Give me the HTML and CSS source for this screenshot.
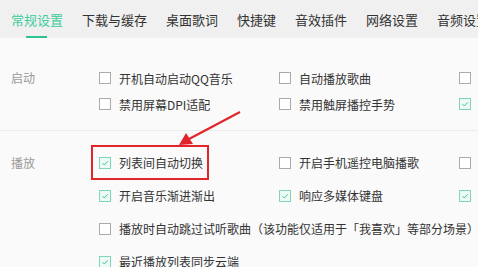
FILE: index.html
```html
<!DOCTYPE html>
<html lang="zh-CN">
<head>
  <meta charset="UTF-8" />
  <title>设置</title>
  <link rel="stylesheet" href="styles.css">
</head>
<body>
  <div class="page">
    <div class="tabs">
      <div class="tab active">常规设置</div>
      <div class="tab">下载与缓存</div>
      <div class="tab">桌面歌词</div>
      <div class="tab">快捷键</div>
      <div class="tab">音效插件</div>
      <div class="tab">网络设置</div>
      <div class="tab">音频设置</div>
    </div>

    <div class="content">
      <div class="section first">
        <div class="label">启动</div>
        <div class="options">
          <div class="opt"><span class="box"></span>开机自动启动QQ音乐</div>
          <div class="opt"><span class="box"></span>自动播放歌曲</div>
          <div class="opt"><span class="box"></span></div>
          <div class="opt"><span class="box"></span>禁用屏幕DPI适配</div>
          <div class="opt"><span class="box"></span>禁用触屏播控手势</div>
          <div class="opt"><span class="box on"></span></div>
        </div>
      </div>

      <div class="section second">
        <div class="label">播放</div>
        <div class="options">
          <div class="opt"><span class="box on"></span>列表间自动切换</div>
          <div class="opt"><span class="box"></span>开启手机遥控电脑播歌</div>
          <div class="opt"><span class="box"></span></div>
          <div class="opt"><span class="box on"></span>开启音乐渐进渐出</div>
          <div class="opt"><span class="box on"></span>响应多媒体键盘</div>
          <div class="opt"><span class="box on"></span></div>
          <div class="opt wide"><span class="box"></span>播放时自动跳过试听歌曲（该功能仅适用于「我喜欢」等部分场景）</div>
          <div class="opt"><span class="box on"></span>最近播放列表同步云端</div>
        </div>
      </div>
    </div>

    <svg class="marks" width="478" height="267" viewBox="0 0 478 267">
      <rect x="92" y="146" width="116" height="33" fill="none" stroke="#e0262b" stroke-width="2"/>
      <line x1="240" y1="112" x2="189" y2="139" stroke="#e0262b" stroke-width="2.2"/>
      <polygon points="179,145 186,133 193,144" fill="#e0262b"/>
    </svg>
  </div>

  <script>
    // draw the tick inside checked boxes
    document.querySelectorAll(".box.on").forEach(b => {
      b.innerHTML = '<svg width="10" height="10" viewBox="0 0 10 10"><path d="M2.5 5.2 L4.3 7 L7.8 3.3" fill="none" stroke="#3cc696" stroke-width="1"/></svg>';
    });
  </script>
</body>
</html>
```

FILE: styles.css
```css
body {
  margin: 0;
  font-family: "Noto Sans CJK SC", "Noto Sans", sans-serif;
  color: #333;
  background: #fafafa;
  overflow: hidden;
}
.page {
  position: relative;
  width: 478px;
  height: 267px;
  overflow: hidden;
}
.tabs {
  display: flex;
  gap: 19px;
  height: 38px;
  padding-left: 11px;
  background: #f0f0f0;
  white-space: nowrap;
}
.tab {
  position: relative;
  font-size: 13px;
  line-height: 39px;
  color: #333;
}
.tab.active {
  color: #3fcd9c;
}
.tab.active::after {
  content: "";
  position: absolute;
  left: 15px;
  bottom: 0;
  width: 21px;
  height: 2px;
  background: #2fc48f;
}
.content {
  background: #fafafa;
}
.section {
  display: flex;
  padding-left: 11px;
}
.section.first {
  padding-top: 27px;
  padding-bottom: 13px;
  border-bottom: 1px solid #ececec;
}
.section.second {
  padding-top: 15px;
}
.label {
  width: 88px;
  flex: none;
  font-size: 12px;
  color: #999;
}
.first .label { line-height: 26px; }
.second .label { line-height: 33px; }
.options {
  display: grid;
  grid-template-columns: 180px 180px 180px;
  flex: none;
}
.opt {
  display: flex;
  align-items: center;
  font-size: 12px;
  white-space: nowrap;
}
.first .opt { height: 26px; }
.second .opt { height: 33px; }
.opt.wide {
  grid-column: 1 / -1;
}
.box {
  width: 10px;
  height: 10px;
  margin-right: 8px;
  border: 1px solid #aaa;
  background: #fff;
  flex: none;
  display: flex;
  align-items: center;
  justify-content: center;
}
.box.on {
  border-color: #7fd6b6;
  background: #eefaf5;
}
.marks {
  position: absolute;
  left: 0;
  top: 0;
  pointer-events: none;
}
```
